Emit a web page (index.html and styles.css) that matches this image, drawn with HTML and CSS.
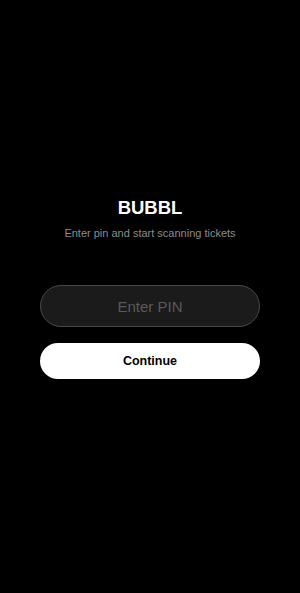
FILE: index.html
```html
<!DOCTYPE html>
<html>
<head>
<meta charset="utf-8">
<link rel="stylesheet" href="styles.css">
</head>
<body>
<main class="screen">
  <h1 class="title">BUBBL</h1>
  <p class="subtitle">Enter pin and start scanning tickets</p>
  <form class="form">
    <input class="pin" type="text" placeholder="Enter PIN">
    <button class="continue" type="button">Continue</button>
  </form>
</main>
</body>
</html>
```
FILE: styles.css
```css
html, body {
  margin: 0;
  padding: 0;
  background: #000;
  height: 100%;
}
.screen {
  display: flex;
  flex-direction: column;
  align-items: center;
  padding-top: 197px;
  font-family: "Liberation Sans", Arial, sans-serif;
}
.title {
  margin: 0;
  font-size: 18.5px;
  line-height: 22px;
  font-weight: 700;
  color: #fff;
}
.subtitle {
  margin: 7px 0 0;
  font-size: 11px;
  line-height: 14px;
  color: #8c8c8c;
}
.form {
  margin-top: 45px;
  display: flex;
  flex-direction: column;
  gap: 16px;
  width: 220px;
}
.pin {
  box-sizing: border-box;
  width: 100%;
  height: 42px;
  border: 1px solid #484848;
  border-radius: 21px;
  background: #1b1b1b;
  color: #fff;
  text-align: center;
  font-family: "Liberation Sans", Arial, sans-serif;
  font-size: 15px;
  outline: none;
  padding: 0 12px;
}
.pin::placeholder {
  color: #595959;
}
.continue {
  height: 36px;
  border: none;
  border-radius: 18px;
  background: #fff;
  color: #000;
  font-family: "Liberation Sans", Arial, sans-serif;
  font-size: 12.5px;
  font-weight: 700;
  padding: 0;
}
```
